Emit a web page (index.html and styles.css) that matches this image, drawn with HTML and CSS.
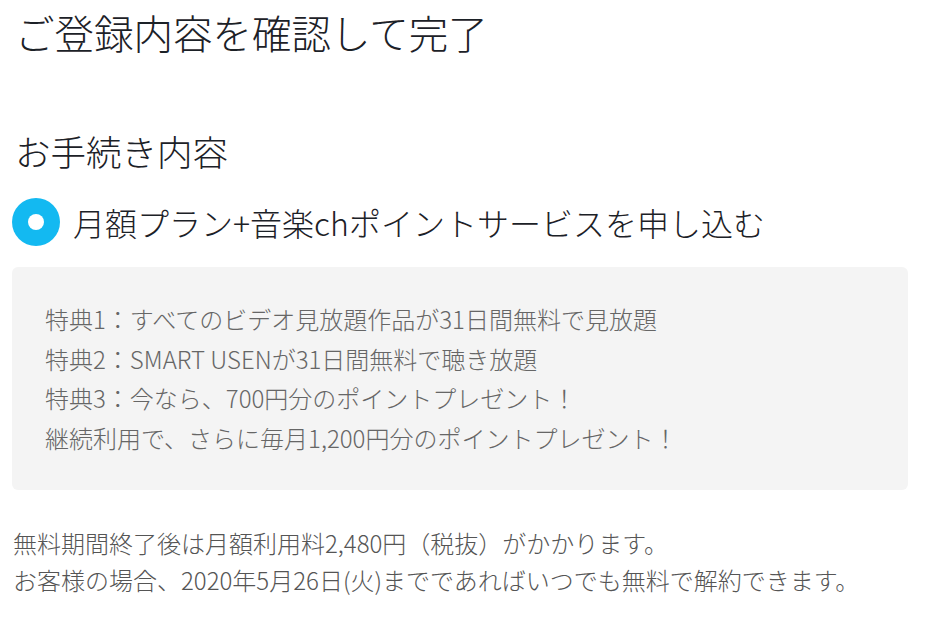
FILE: index.html
```html
<!DOCTYPE html>
<html lang="ja">
<head>
<meta charset="utf-8">
<link rel="stylesheet" href="styles.css">
</head>
<body>
<main class="page">
  <h1 class="title">ご登録内容を確認して完了</h1>
  <h2 class="section">お手続き内容</h2>
  <div class="option">
    <span class="radio"><span class="dot"></span></span>
    <span class="option-label">月額プラン+音楽chポイントサービスを申し込む</span>
  </div>
  <div class="benefits">
    <p>特典1：すべてのビデオ見放題作品が31日間無料で見放題</p>
    <p>特典2：SMART USENが31日間無料で聴き放題</p>
    <p>特典3：今なら、700円分のポイントプレゼント！</p>
    <p>継続利用で、さらに毎月1,200円分のポイントプレゼント！</p>
  </div>
  <div class="notes">
    <p>無料期間終了後は月額利用料2,480円（税抜）がかかります。</p>
    <p>お客様の場合、2020年5月26日(火)までであればいつでも無料で解約できます。</p>
  </div>
</main>
</body>
</html>
```
FILE: styles.css
```css
html, body {
  margin: 0;
  padding: 0;
  background: #ffffff;
}
body {
  font-family: "Noto Sans CJK JP", "Noto Sans", sans-serif;
  font-weight: 300;
  color: #1f2328;
}
.page {
  display: flex;
  flex-direction: column;
  padding: 0 22px 0 12px;
}
.title {
  margin: 8px 0 0 3px;
  font-size: 39.5px;
  font-weight: 300;
  line-height: 48px;
  color: #1c2127;
}
.section {
  margin: 73px 0 0 3px;
  font-size: 35.5px;
  font-weight: 300;
  line-height: 44px;
  color: #1c2127;
}
.option {
  display: flex;
  align-items: center;
  gap: 13px;
  margin-top: 25px;
  height: 48px;
}
.radio {
  width: 48px;
  height: 48px;
  border-radius: 50%;
  background: #13b9f1;
  display: flex;
  align-items: center;
  justify-content: center;
  flex: none;
}
.dot {
  width: 16px;
  height: 16px;
  border-radius: 50%;
  background: #ffffff;
}
.option-label {
  font-size: 32px;
  line-height: 40px;
  color: #1c2127;
}
.benefits {
  margin-top: 21px;
  background: #f4f4f4;
  border-radius: 6px;
  padding: 32px 0 33px 33px;
  height: 223px;
  box-sizing: border-box;
}
.benefits p {
  margin: 0;
  font-size: 24px;
  line-height: 39.5px;
  color: #666666;
}
.notes {
  margin-top: 34px;
  margin-left: 1px;
}
.notes p {
  margin: 0;
  font-size: 24px;
  line-height: 37px;
  color: #555555;
}
```
